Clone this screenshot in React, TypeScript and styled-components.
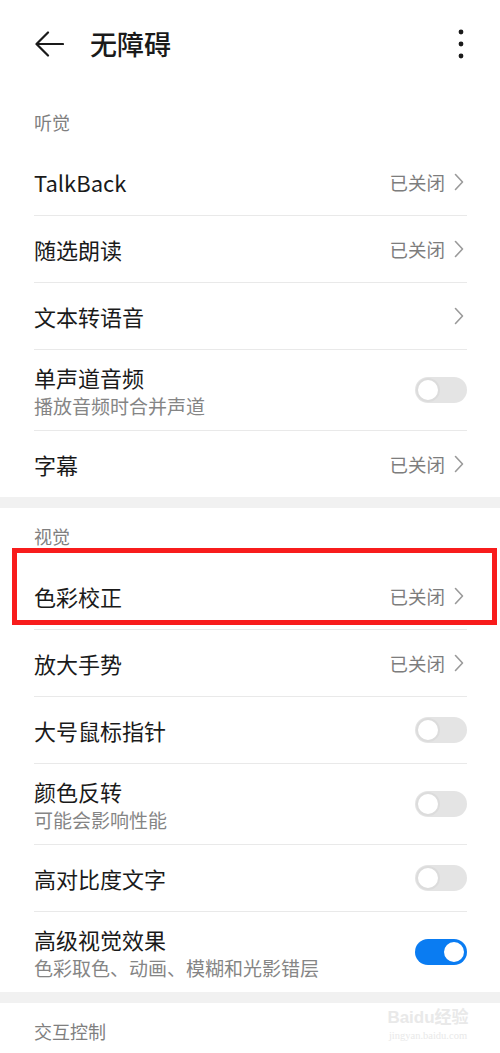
import React from "react";
import styled, { createGlobalStyle } from "styled-components";

const GlobalStyle = createGlobalStyle`
  html, body { margin: 0; padding: 0; background: #ffffff; }
  body {
    font-family: "Noto Sans CJK SC", "Noto Sans", sans-serif;
    -webkit-font-smoothing: antialiased;
  }
`;

const Page = styled.div`
  width: 500px;
  min-height: 1053px;
  background: #ffffff;
  overflow: hidden;
  position: relative;
`;

const Header = styled.header`
  height: 91px;
  padding: 0 0 3px 0;
  box-sizing: border-box;
  display: flex;
  align-items: center;
`;

const BackButton = styled.div`
  width: 90px;
  padding-left: 35px;
  box-sizing: border-box;
  display: flex;
  align-items: center;
`;

const Title = styled.h1`
  margin: 0;
  flex: 1;
  font-size: 27px;
  font-weight: 500;
  color: #1a1a1a;
  line-height: 34px;
`;

const MoreButton = styled.div`
  width: 42px;
  display: flex;
  align-items: center;
`;

const Section = styled.section`
  background: #ffffff;
  position: relative;
`;

const Band = styled.div`
  height: 11px;
  background: #f1f1f1;
`;

const SectionLabel = styled.div<{ $top: number }>`
  padding: ${(p) => p.$top}px 34px 15px 34px;
  font-size: 18px;
  line-height: 24px;
  color: #7f7f7f;
`;

const Row = styled.div<{ $tall?: boolean; $divider?: boolean }>`
  position: relative;
  margin: 0 33px 0 34px;
  height: ${(p) => (p.$tall ? 80 : 66)}px;
  box-sizing: content-box;
  border-bottom: ${(p) => (p.$divider ? "1px solid #e9e9e9" : "0")};
  display: flex;
  align-items: center;
`;

const TextCol = styled.div`
  flex: 1;
  display: flex;
  flex-direction: column;
  gap: 3px;
`;

const RowTitle = styled.div`
  font-size: 22px;
  line-height: 28px;
  color: #1a1a1a;
`;

const RowSub = styled.div`
  font-size: 19px;
  line-height: 24px;
  color: #858585;
`;

const Trailing = styled.div<{ $chev?: boolean }>`
  display: flex;
  align-items: center;
  gap: 9px;
  padding-right: ${(p) => (p.$chev ? 3 : 0)}px;
`;

const Status = styled.span`
  font-size: 18.5px;
  line-height: 24px;
  color: #7d7d7d;
`;

const Track = styled.div<{ $on?: boolean }>`
  width: 52px;
  height: 26px;
  border-radius: 13px;
  background: ${(p) => (p.$on ? "#0a7cf2" : "#e4e4e4")};
  display: flex;
  align-items: center;
  justify-content: ${(p) => (p.$on ? "flex-end" : "flex-start")};
  padding: 0 1px;
  box-sizing: border-box;
`;

const Knob = styled.div<{ $on?: boolean }>`
  width: 24px;
  height: 24px;
  border-radius: 50%;
  background: #ffffff;
  box-sizing: border-box;
  border: 2px solid ${(p) => (p.$on ? "#0a7cf2" : "#dcdcdc")};
`;

const Highlight = styled.div`
  position: absolute;
  left: -22px;
  right: -30px;
  top: -15px;
  bottom: 4px;
  border: 5px solid #f81c1c;
  pointer-events: none;
`;

const Watermark = styled.div`
  position: absolute;
  left: 383px;
  top: 4px;
  width: 90px;
  display: flex;
  flex-direction: column;
  align-items: center;
  color: #e9e9e9;
  white-space: nowrap;
  pointer-events: none;
`;

const WatermarkMain = styled.span`
  font-family: "Liberation Sans", "Noto Sans CJK SC", sans-serif;
  font-size: 17px;
  font-weight: 700;
  line-height: 22px;
`;

const WatermarkSub = styled.span`
  font-family: "Liberation Serif", serif;
  font-size: 10.5px;
  line-height: 13px;
`;

const Chevron = () => (
  <svg width="10" height="18" viewBox="0 0 10 18">
    <polyline points="1.5,1.5 8.5,9 1.5,16.5" fill="none" stroke="#9a9a9a" strokeWidth="1.6" strokeLinecap="round" strokeLinejoin="round" />
  </svg>
);

const BackArrow = () => (
  <svg width="29" height="26" viewBox="0 0 29 26">
    <line x1="2" y1="13" x2="28" y2="13" stroke="#1a1a1a" strokeWidth="2.2" strokeLinecap="round" />
    <polyline points="13,1.5 1.5,13 13,24.5" fill="none" stroke="#1a1a1a" strokeWidth="2.2" strokeLinecap="round" strokeLinejoin="round" />
  </svg>
);

const Kebab = () => (
  <svg width="6" height="30" viewBox="0 0 6 30">
    <circle cx="3" cy="3" r="2.4" fill="#1a1a1a" />
    <circle cx="3" cy="15" r="2.4" fill="#1a1a1a" />
    <circle cx="3" cy="27" r="2.4" fill="#1a1a1a" />
  </svg>
);

type Item = {
  title: string;
  sub?: string;
  kind: "link" | "linkStatus" | "toggle";
  on?: boolean;
  highlight?: boolean;
};

const Toggle = ({ on }: { on?: boolean }) => (
  <Track $on={on}>
    <Knob $on={on} />
  </Track>
);

const SettingRow = ({ item, last }: { item: Item; last: boolean }) => (
  <Row $tall={!!item.sub} $divider={!last}>
    {item.highlight && <Highlight />}
    <TextCol>
      <RowTitle>{item.title}</RowTitle>
      {item.sub && <RowSub>{item.sub}</RowSub>}
    </TextCol>
    <Trailing $chev={item.kind !== "toggle"}>
      {item.kind === "linkStatus" && <Status>已关闭</Status>}
      {item.kind !== "toggle" && <Chevron />}
      {item.kind === "toggle" && <Toggle on={item.on} />}
    </Trailing>
  </Row>
);

const hearing: Item[] = [
  { title: "TalkBack", kind: "linkStatus" },
  { title: "随选朗读", kind: "linkStatus" },
  { title: "文本转语音", kind: "link" },
  { title: "单声道音频", sub: "播放音频时合并声道", kind: "toggle" },
  { title: "字幕", kind: "linkStatus" },
];

const vision: Item[] = [
  { title: "色彩校正", kind: "linkStatus", highlight: true },
  { title: "放大手势", kind: "linkStatus" },
  { title: "大号鼠标指针", kind: "toggle" },
  { title: "颜色反转", sub: "可能会影响性能", kind: "toggle" },
  { title: "高对比度文字", kind: "toggle" },
  { title: "高级视觉效果", sub: "色彩取色、动画、模糊和光影错层", kind: "toggle", on: true },
];

export default function App() {
  return (
    <>
      <GlobalStyle />
      <Page>
        <Header>
          <BackButton>
            <BackArrow />
          </BackButton>
          <Title>无障碍</Title>
          <MoreButton>
            <Kebab />
          </MoreButton>
        </Header>
        <Section>
          <SectionLabel $top={19}>听觉</SectionLabel>
          {hearing.map((it, i) => (
            <SettingRow key={it.title} item={it} last={i === hearing.length - 1} />
          ))}
        </Section>
        <Band />
        <Section>
          <SectionLabel $top={16}>视觉</SectionLabel>
          {vision.map((it, i) => (
            <SettingRow key={it.title} item={it} last={i === vision.length - 1} />
          ))}
        </Section>
        <Band />
        <Section>
          <SectionLabel $top={16}>交互控制</SectionLabel>
          <Watermark>
            <WatermarkMain>Baidu经验</WatermarkMain>
            <WatermarkSub>jingyan.baidu.com</WatermarkSub>
          </Watermark>
        </Section>
      </Page>
    </>
  );
}
